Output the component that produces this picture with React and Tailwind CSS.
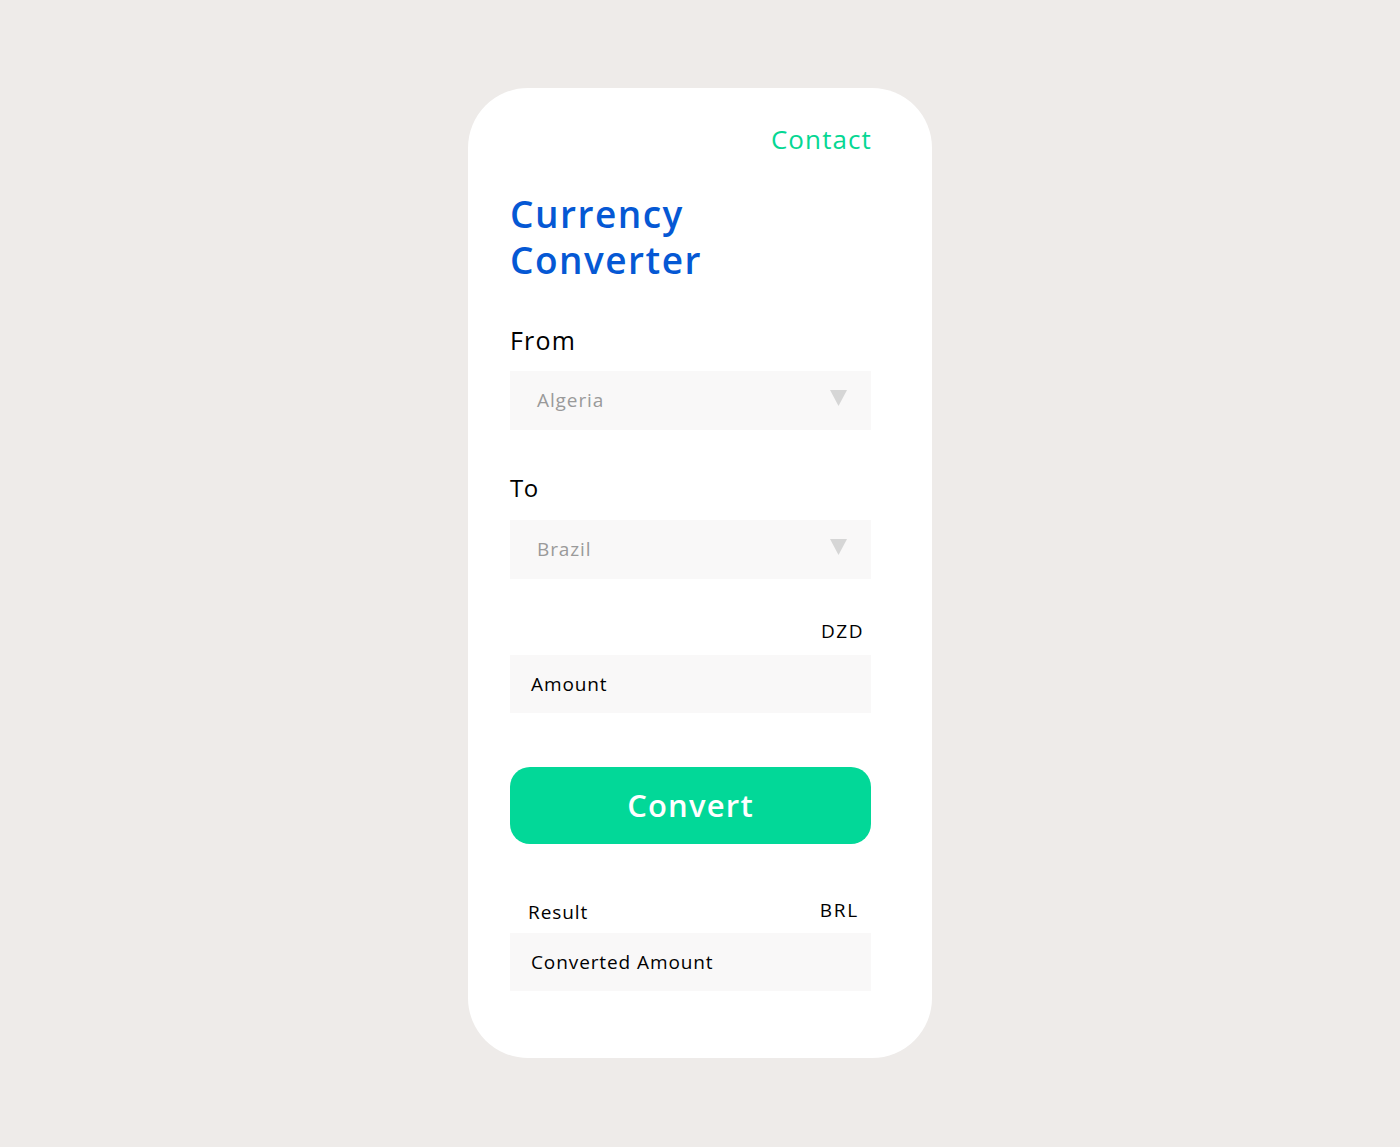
import { useState } from 'react';

const font = { fontFamily: '"Open Sans", "Liberation Sans", sans-serif' };

function Caret() {
  return (
    <svg width="17" height="16" viewBox="0 0 17 16" className="shrink-0">
      <path d="M0 0 H17 L8.5 16 Z" fill="#d6d6d6" />
    </svg>
  );
}

function SelectBox({ value }) {
  return (
    <div className="h-[59px] bg-[#f9f8f8] flex items-center justify-between pl-[27px] pr-[24px]">
      <span className="text-[19px] text-[#9a9a9a] tracking-[0.9px]">{value}</span>
      <div className="-mt-[6px]">
        <Caret />
      </div>
    </div>
  );
}

export default function App() {
  const [amount] = useState('');

  return (
    <div className="min-h-screen bg-[#eeebe9] flex justify-center pt-[88px]" style={font}>
      <div className="w-[464px] h-[970px] bg-white rounded-[60px] pl-[42px] pr-[61px] pt-[35px]">
        <div className="text-right text-[26px] leading-[32px] text-[#05d793] tracking-[1.1px] -mr-[1px]">
          Contact
        </div>

        <h1 className="mt-[36px] text-[37px] leading-[46px] font-semibold text-[#0558d4] tracking-[1.5px]">
          Currency
          <br />
          Converter
        </h1>

        <div className="mt-[42px] text-[25px] leading-[30px] text-black tracking-[1.2px]">From</div>
        <div className="mt-[16px]">
          <SelectBox value="Algeria" />
        </div>

        <div className="mt-[43px] text-[24px] leading-[30px] text-black tracking-[0.5px]">To</div>
        <div className="mt-[17px]">
          <SelectBox value="Brazil" />
        </div>

        <div className="mt-[40px] text-right pr-[8px] text-[19px] leading-[24px] text-black tracking-[1.5px] -mr-[1px]">
          DZD
        </div>
        <div className="mt-[12px] h-[58px] bg-[#f9f8f8] flex items-center pl-[21px] text-[19px] text-black tracking-[0.9px]">
          {amount || 'Amount'}
        </div>

        <button className="mt-[54px] w-full h-[77px] rounded-[20px] bg-[#02d898] text-white text-[31px] font-semibold tracking-[1.2px]">
          Convert
        </button>

        <div className="mt-[56px] flex justify-between items-end pl-[18px] pr-[13px] text-[19px] leading-[24px] text-black">
          <span className="tracking-[0.9px]">Result</span>
          <span className="relative -top-[2px] tracking-[1.8px] -mr-[1px]">BRL</span>
        </div>
        <div className="mt-[9px] h-[58px] bg-[#f9f8f8] flex items-center pl-[21px] text-[19px] text-black tracking-[0.9px]">
          Converted Amount
        </div>
      </div>
    </div>
  );
}
